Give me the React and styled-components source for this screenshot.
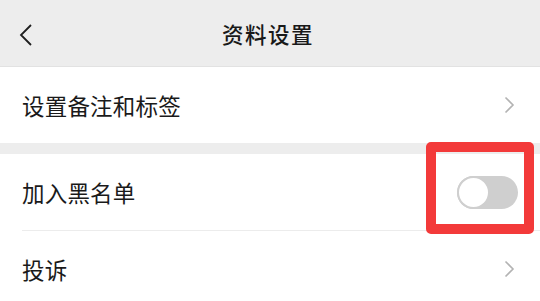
import React from 'react';
import styled, { createGlobalStyle } from 'styled-components';

const GlobalStyle = createGlobalStyle`
  html, body {
    margin: 0;
    padding: 0;
    background: #ededed;
    font-family: "Noto Sans CJK SC", "Noto Sans", sans-serif;
  }
`;

const Page = styled.div`
  width: 540px;
  height: 301px;
  overflow: hidden;
  background: #ededed;
`;

const Header = styled.header`
  position: relative;
  height: 66px;
  display: flex;
  align-items: center;
  justify-content: center;
  background: #ededed;
  border-bottom: 1px solid #e2e2e2;
`;

const BackButton = styled.button`
  position: absolute;
  left: 19px;
  top: 24px;
  padding: 0;
  border: none;
  background: none;
  display: flex;
`;

const Title = styled.h1`
  margin: 0;
  font-size: 21.5px;
  font-weight: 500;
  color: #191919;
  letter-spacing: 1.5px;
  margin-right: 4px;
`;

const Group = styled.section`
  background: #fff;
  margin-top: ${p => p.gap || 0}px;
`;

const Row = styled.div`
  position: relative;
  height: 76px;
  display: flex;
  align-items: center;
  justify-content: space-between;
  padding: 0 22px;
  box-sizing: border-box;

  & + & {
    height: 78px;
  }

  & + &::before {
    content: '';
    position: absolute;
    top: 0;
    left: 22px;
    right: 0;
    border-top: 1px solid #ececec;
  }
`;

const Label = styled.span`
  font-size: 22.5px;
  color: #1a1a1a;
  letter-spacing: 0.2px;
`;

const Chevron = () => (
  <svg width="12" height="18" viewBox="0 0 12 18" fill="none" style={{ marginRight: 2 }}>
    <path d="M1.5 1.5 L9 9 L1.5 16.5" stroke="#b3b3b3" strokeWidth="1.6" />
  </svg>
);

const Switch = styled.div`
  position: relative;
  width: 61px;
  height: 33px;
  border-radius: 17px;
  background: #cfcfcf;

  &::after {
    content: '';
    position: absolute;
    left: 0;
    top: 0;
    width: 29px;
    height: 29px;
    border-radius: 50%;
    background: #fff;
    border: 2px solid #cfcfcf;
  }
`;

const Highlight = styled.div`
  position: absolute;
  z-index: 2;
  right: 6px;
  top: -12px;
  width: 108px;
  height: 92px;
  box-sizing: border-box;
  border: 10px solid #f33a3a;
  border-radius: 5px;
  pointer-events: none;
`;

export default function App() {
  return (
    <>
      <GlobalStyle />
      <Page>
        <Header>
          <BackButton aria-label="返回">
            <svg width="14" height="22" viewBox="0 0 14 22" fill="none">
              <path d="M12 1 L2 11 L12 21" stroke="#1f1f1f" strokeWidth="1.8" />
            </svg>
          </BackButton>
          <Title>资料设置</Title>
        </Header>
        <Group>
          <Row>
            <Label>设置备注和标签</Label>
            <Chevron />
          </Row>
        </Group>
        <Group gap={11}>
          <Row>
            <Label>加入黑名单</Label>
            <Switch />
            <Highlight />
          </Row>
          <Row>
            <Label>投诉</Label>
            <Chevron />
          </Row>
        </Group>
      </Page>
    </>
  );
}
